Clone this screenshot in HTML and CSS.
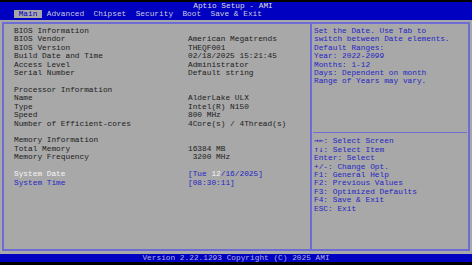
FILE: index.html
```html
<!DOCTYPE html>
<html>
<head>
<meta charset="utf-8">
<link rel="stylesheet" href="styles.css">
</head>
<body>
<div class="screen">
  <header class="top">
    <div class="title">Aptio Setup - AMI</div>
    <nav class="tabs">
      <span class="tab active">Main</span>
      <span class="tab">Advanced</span>
      <span class="tab">Chipset</span>
      <span class="tab">Security</span>
      <span class="tab">Boot</span>
      <span class="tab">Save &amp; Exit</span>
    </nav>
  </header>
  <main class="body">
    <div class="frame">
      <section class="left">
        <div class="grid">
          <div class="lbl">BIOS Information</div><div></div>
          <div class="lbl">BIOS Vendor</div><div class="val">American Megatrends</div>
          <div class="lbl">BIOS Version</div><div class="val">THEQF001</div>
          <div class="lbl">Build Date and Time</div><div class="val">02/18/2025 15:21:45</div>
          <div class="lbl">Access Level</div><div class="val">Administrator</div>
          <div class="lbl">Serial Number</div><div class="val">Default string</div>
          <div class="gap"></div><div></div>
          <div class="lbl">Processor Information</div><div></div>
          <div class="lbl">Name</div><div class="val">AlderLake ULX</div>
          <div class="lbl">Type</div><div class="val">Intel(R) N150</div>
          <div class="lbl">Speed</div><div class="val">800 MHz</div>
          <div class="lbl">Number of Efficient-cores</div><div class="val">4Core(s) / 4Thread(s)</div>
          <div class="gap"></div><div></div>
          <div class="lbl">Memory Information</div><div></div>
          <div class="lbl">Total Memory</div><div class="val">16384 MB</div>
          <div class="lbl">Memory Frequency</div><div class="val"> 3200 MHz</div>
          <div class="gap"></div><div></div>
          <div class="lbl sel">System Date</div><div class="val blue">[Tue <span class="cur">12</span>/16/2025]</div>
          <div class="lbl blue">System Time</div><div class="val blue">[08:30:11]</div>
        </div>
      </section>
      <aside class="right">
        <div class="help">
          <div class="ln">Set the Date. Use Tab to</div>
          <div class="ln">switch between Date elements.</div>
          <div class="ln">Default Ranges:</div>
          <div class="ln">Year: 2022-2099</div>
          <div class="ln">Months: 1-12</div>
          <div class="ln">Days: Dependent on month</div>
          <div class="ln">Range of Years may vary.</div>
        </div>
        <div class="keys">
          <div class="ln"><span class="arw">→←</span>: Select Screen</div>
          <div class="ln"><span class="arw">↑↓</span>: Select Item</div>
          <div class="ln">Enter: Select</div>
          <div class="ln">+/-: Change Opt.</div>
          <div class="ln">F1: General Help</div>
          <div class="ln">F2: Previous Values</div>
          <div class="ln">F3: Optimized Defaults</div>
          <div class="ln">F4: Save &amp; Exit</div>
          <div class="ln">ESC: Exit</div>
        </div>
      </aside>
    </div>
  </main>
  <footer class="foot">Version 2.22.1293 Copyright (C) 2025 AMI</footer>
</div>
</body>
</html>
```

FILE: styles.css
```css
* { box-sizing: border-box; margin: 0; padding: 0; }
html, body { width: 472px; height: 265px; background: #000; overflow: hidden; }
body {
  font-family: "Liberation Mono", "DejaVu Sans Mono", monospace;
  font-size: 7.8px;
  line-height: 8.45px;
}
.title, .tab, .lbl, .val, .ln, .foot { white-space: pre; }
.screen { padding-top: 2px; display: flex; flex-direction: column; height: 265px; }
.top { background: #0000c0; height: 18px; }
.title { color: #dcdcdc; text-align: center; line-height: 8px; height: 8px; margin-left: -6px; }
.tabs { display: flex; padding-left: 14px; height: 8.4px; line-height: 8.4px; }
.tab { color: #cacade; padding: 0 4.68px; }
.tab.active { background: #a8a8a8; color: #0000c0; }
.body { background: #a8a8a8; height: 234px; padding: 2px 2px 3px 2px; }
.frame {
  height: 229px;
  border: 2px solid #6c6cd2;
  display: flex;
}
.left { width: 308px; padding: 2.8px 0 0 10px; border-right: 2px solid #6c6cd2; }
.grid { display: grid; grid-template-columns: 174px auto; }
.lbl, .val { color: #1c1c1c; height: 8.45px; }
.gap { height: 8.45px; }
.blue { color: #2626c4; }
.sel { color: #f6f6f6; }
.cur { color: #f6f6f6; }
.right { flex: 1; display: flex; flex-direction: column; color: #2626c4; }
.ln { height: 8.45px; }
.arw { font-family: "DejaVu Sans Mono", monospace; font-size: 7.8px; }
.help { height: 109px; padding: 2.8px 0 0 1px; border-bottom: 1px solid #6c6cd2; margin: 0 1px; }
.keys { padding: 4.2px 0 0 2px; }
.foot { background: #0000c0; color: #b0b0dc; text-align: center; height: 8px; line-height: 8px; }
```
